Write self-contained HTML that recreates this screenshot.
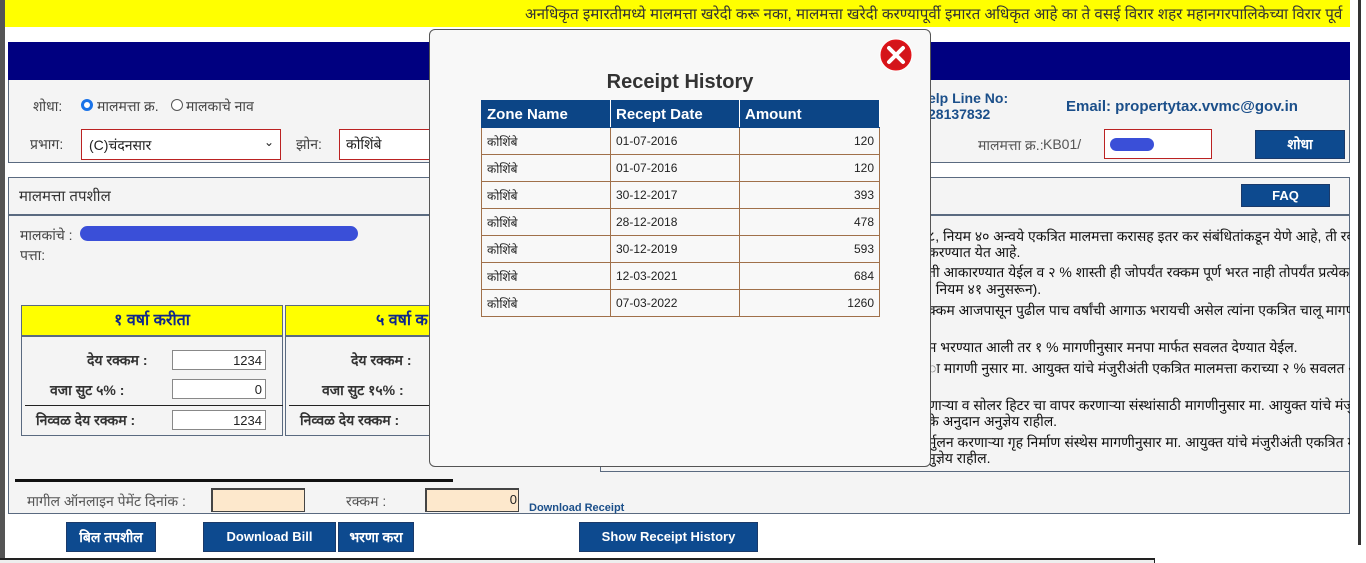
<!DOCTYPE html>
<html><head><meta charset="utf-8">
<style>
*{margin:0;padding:0;box-sizing:border-box}
body{width:1366px;height:563px;overflow:hidden;background:#fff;font-family:"Liberation Sans","Noto Sans CJK SC",sans-serif;position:relative;font-size:14px;color:#222}
.a{position:absolute}
.btn{position:absolute;background:#0d4a8f;color:#fff;font-weight:bold;font-size:13px;text-align:center;border:1px solid #1a3a6a}
.inp{position:absolute;background:#fff;border:1px solid #888;text-align:right;font-size:13px;padding-right:3px;line-height:20px}
table{border-collapse:collapse}
td,th{border:1px solid #a0704a;font-size:12px;height:27px;padding:0 5px;text-align:left}
th{background:#0c4586;color:#fff;font-size:15px;border-color:#0c4586;border-right:1px solid #fff}
.rt{position:absolute;left:928px;font-size:14px;color:#111;white-space:nowrap}
</style></head><body>
<div class="a" style="left:0;top:0;width:5px;height:563px;background:#555"></div>
<div class="a" style="left:5px;top:0;width:1345px;height:27px;background:#ffff00"></div>
<div class="a" style="left:525px;top:4px;font-size:15.2px;color:#333;white-space:nowrap">अनधिकृत इमारतीमध्ये मालमत्ता खरेदी करू नका, मालमत्ता खरेदी करण्यापूर्वी इमारत अधिकृत आहे का ते वसई विरार शहर महानगरपालिकेच्या विरार पूर्व</div>
<div class="a" style="left:1358px;top:0;width:3px;height:545px;background:#333"></div>

<div class="a" style="left:8px;top:42px;width:1342px;height:38px;background:#000080"></div>
<div class="a" style="left:8px;top:80px;width:1342px;height:83px;background:#f4f4f4;border:1px solid #5a6a80;border-top:none"></div>
<div class="a" style="left:33px;top:97px;font-size:14px;color:#444">शोधा:</div>
<div class="a" style="left:81px;top:99px;width:12px;height:12px;border-radius:50%;border:3px solid #1a73e8;background:#fff"></div>
<div class="a" style="left:97px;top:97px;font-size:14px;color:#444">मालमत्ता क्र.</div>
<div class="a" style="left:171px;top:99px;width:12px;height:12px;border-radius:50%;border:1px solid #555;background:#fff"></div>
<div class="a" style="left:186px;top:97px;font-size:14px;color:#444">मालकाचे नाव</div>
<div class="a" style="left:30px;top:135px;font-size:14px;color:#444">प्रभाग:</div>
<div class="a" style="left:81px;top:129px;width:200px;height:31px;border:1px solid #b22;background:#fff;font-size:14px;padding:6px 7px">(C)चंदनसार<span style="position:absolute;right:6px;top:5px;font-size:12px">⌄</span></div>
<div class="a" style="left:296px;top:135px;font-size:14px;color:#444">झोन:</div>
<div class="a" style="left:339px;top:129px;width:100px;height:31px;border:1px solid #b22;border-right:none;background:#fff;font-size:14px;padding:5px 6px">कोशिंबे</div>
<div class="a" style="left:928px;top:90px;font-size:14px;font-weight:bold;color:#1b4f8a;line-height:16px">elp Line No:<br>28137832</div>
<div class="a" style="left:1066px;top:98px;font-size:15px;font-weight:bold;color:#1b4f8a">Email: propertytax.vvmc@gov.in</div>
<div class="a" style="left:978px;top:136px;font-size:14px;color:#555">मालमत्ता क्र.:</div>
<div class="a" style="left:1043px;top:136px;font-size:14px;color:#555">KB01/</div>
<div class="a" style="left:1104px;top:129px;width:108px;height:30px;border:1px solid #b22;background:#fff"></div>
<div class="a" style="left:1110px;top:138px;width:44px;height:13px;border-radius:7px;background:#3a4fd8"></div>
<div class="btn" style="left:1255px;top:130px;width:90px;height:29px;line-height:27px;font-size:14px">शोधा</div>

<div class="a" style="left:8px;top:177px;width:1342px;height:337px;background:#f4f4f4;border:1px solid #5a6a80"></div>
<div class="a" style="left:8px;top:214px;width:1342px;height:2px;background:#5a6a80"></div>
<div class="a" style="left:19px;top:186px;font-size:15px;color:#333">मालमत्ता तपशील</div>
<div class="btn" style="left:1241px;top:184px;width:89px;height:23px;line-height:21px;font-size:13px">FAQ</div>
<div class="a" style="left:20px;top:226px;font-size:14px;color:#444">मालकांचे :</div>
<div class="a" style="left:80px;top:226px;width:278px;height:15px;border-radius:8px;background:#3a4fd8"></div>
<div class="a" style="left:20px;top:246px;font-size:14px;color:#444">पत्ता:</div>

<div class="a" style="left:928px;top:220px;width:422px;height:250px;overflow:hidden">
<div class="rt" style="left:0;top:7px">८, नियम ४० अन्वये एकत्रित मालमत्ता करासह इतर कर संबंधितांकडून येणे आहे, ती रक</div>
<div class="rt" style="left:0;top:23px">करण्यात येत आहे.</div>
<div class="rt" style="left:0;top:43px">ती आकारण्यात येईल व २ % शास्ती ही जोपर्यंत रक्कम पूर्ण भरत नाही तोपर्यंत प्रत्येक म</div>
<div class="rt" style="left:0;top:60px">, नियम ४१ अनुसरून).</div>
<div class="rt" style="left:0;top:81px">क्कम आजपासून पुढील पाच वर्षांची आगाऊ भरायची असेल त्यांना एकत्रित चालू मागणीच</div>
<div class="rt" style="left:0;top:118px">म भरण्यात आली तर १ % मागणीनुसार मनपा मार्फत सवलत देण्यात येईल.</div>
<div class="rt" style="left:0;top:139px">ा मागणी नुसार मा. आयुक्त यांचे मंजुरीअंती एकत्रित मालमत्ता कराच्या २ % सवलत अनु</div>
<div class="rt" style="left:0;top:176px">णाऱ्या व सोलर हिटर चा वापर करणाऱ्या संस्थांसाठी मागणीनुसार मा. आयुक्त यांचे मंजु</div>
<div class="rt" style="left:0;top:192px">के अनुदान अनुज्ञेय राहील.</div>
<div class="rt" style="left:0;top:213px">र्मुलन करणाऱ्या गृह निर्माण संस्थेस मागणीनुसार मा. आयुक्त यांचे मंजुरीअंती एकत्रित म</div>
<div class="rt" style="left:0;top:229px">नुज्ञेय राहील.</div>
</div>
<div class="a" style="left:600px;top:466px;width:750px;height:6px;border:1px solid #5a6a80;border-top:none;border-right:none"></div>

<div class="a" style="left:21px;top:305px;width:262px;height:131px;border:1px solid #5a6a80;background:#f4f4f4"></div>
<div class="a" style="left:22px;top:306px;width:260px;height:31px;background:#ffff00;border-bottom:2px solid #5a6a80;text-align:center;font-weight:bold;font-size:16px;color:#10288a;line-height:30px">१ वर्षा करीता</div>
<div class="a" style="left:285px;top:305px;width:150px;height:131px;border:1px solid #5a6a80;border-right:none;background:#f4f4f4"></div>
<div class="a" style="left:286px;top:306px;width:149px;height:31px;background:#ffff00;border-bottom:2px solid #5a6a80;font-weight:bold;font-size:16px;color:#10288a;line-height:30px;padding-left:90px;white-space:nowrap;overflow:hidden">५ वर्षा क</div>
<div class="a" style="left:87px;top:351px;font-size:14px;font-weight:bold;color:#333">देय रक्कम :</div>
<div class="a" style="left:50px;top:381px;font-size:14px;font-weight:bold;color:#333">वजा सुट ५% :</div>
<div class="a" style="left:25px;top:405px;width:258px;height:1px;background:#222"></div>
<div class="a" style="left:36px;top:411px;font-size:14px;font-weight:bold;color:#333">निव्वळ देय रक्कम :</div>
<div class="inp" style="left:172px;top:350px;width:94px;height:20px">1234</div>
<div class="inp" style="left:172px;top:379px;width:94px;height:20px">0</div>
<div class="inp" style="left:172px;top:410px;width:94px;height:20px">1234</div>
<div class="a" style="left:351px;top:351px;font-size:14px;font-weight:bold;color:#333">देय रक्कम :</div>
<div class="a" style="left:322px;top:381px;font-size:14px;font-weight:bold;color:#333">वजा सुट १५% :</div>
<div class="a" style="left:289px;top:405px;width:146px;height:1px;background:#222"></div>
<div class="a" style="left:300px;top:411px;font-size:14px;font-weight:bold;color:#333">निव्वळ देय रक्कम :</div>

<div class="a" style="left:15px;top:479px;width:438px;height:3px;background:#111"></div>
<div class="a" style="left:27px;top:492px;font-size:14px;color:#555">मागील ऑनलाइन पेमेंट दिनांक :</div>
<div class="a" style="left:211px;top:488px;width:94px;height:24px;background:#fde8cc;border:1px solid #444;border-top-width:2px;border-left-width:2px"></div>
<div class="a" style="left:346px;top:492px;font-size:14px;color:#555">रक्कम :</div>
<div class="a" style="left:425px;top:488px;width:94px;height:24px;background:#fde8cc;border:1px solid #444;border-top-width:2px;border-left-width:2px;text-align:right;font-size:13px;line-height:20px;padding-right:1px">0</div>
<div class="a" style="left:529px;top:502px;font-size:11px;font-weight:bold;color:#1b4f8a">Download Receipt</div>

<div class="btn" style="left:66px;top:522px;width:90px;height:30px;line-height:28px;font-size:14px">बिल तपशील</div>
<div class="btn" style="left:203px;top:522px;width:133px;height:30px;line-height:28px">Download Bill</div>
<div class="btn" style="left:338px;top:522px;width:76px;height:30px;line-height:28px;font-size:14px">भरणा करा</div>
<div class="btn" style="left:579px;top:522px;width:179px;height:30px;line-height:28px">Show Receipt History</div>
<div class="a" style="left:0;top:558px;width:1155px;height:5px;border-top:2px solid #222;border-right:1px solid #222;background:#eee"></div>

<div class="a" style="left:429px;top:29px;width:502px;height:438px;background:#f8f8f8;border:1px solid #555;border-radius:6px"></div>
<div class="a" style="left:429px;top:71px;width:502px;text-align:center;font-size:20px;font-weight:bold;color:#333">Receipt History</div>
<svg class="a" style="left:879px;top:38px" width="34" height="34" viewBox="0 0 34 34"><circle cx="17" cy="17" r="16" fill="#e0141a" stroke="#fff" stroke-width="1"/><circle cx="17" cy="17" r="14" fill="#d4141a"/><path d="M10 10L24 24M24 10L10 24" stroke="#fff" stroke-width="4" stroke-linecap="round"/></svg>
<table class="a" style="left:481px;top:100px;width:399px">
<tr><th style="width:129px">Zone Name</th><th style="width:129px">Recept Date</th><th>Amount</th></tr>
<tr><td>कोशिंबे</td><td>01-07-2016</td><td style="text-align:right">120</td></tr>
<tr><td>कोशिंबे</td><td>01-07-2016</td><td style="text-align:right">120</td></tr>
<tr><td>कोशिंबे</td><td>30-12-2017</td><td style="text-align:right">393</td></tr>
<tr><td>कोशिंबे</td><td>28-12-2018</td><td style="text-align:right">478</td></tr>
<tr><td>कोशिंबे</td><td>30-12-2019</td><td style="text-align:right">593</td></tr>
<tr><td>कोशिंबे</td><td>12-03-2021</td><td style="text-align:right">684</td></tr>
<tr><td>कोशिंबे</td><td>07-03-2022</td><td style="text-align:right">1260</td></tr>
</table>
</body></html>
